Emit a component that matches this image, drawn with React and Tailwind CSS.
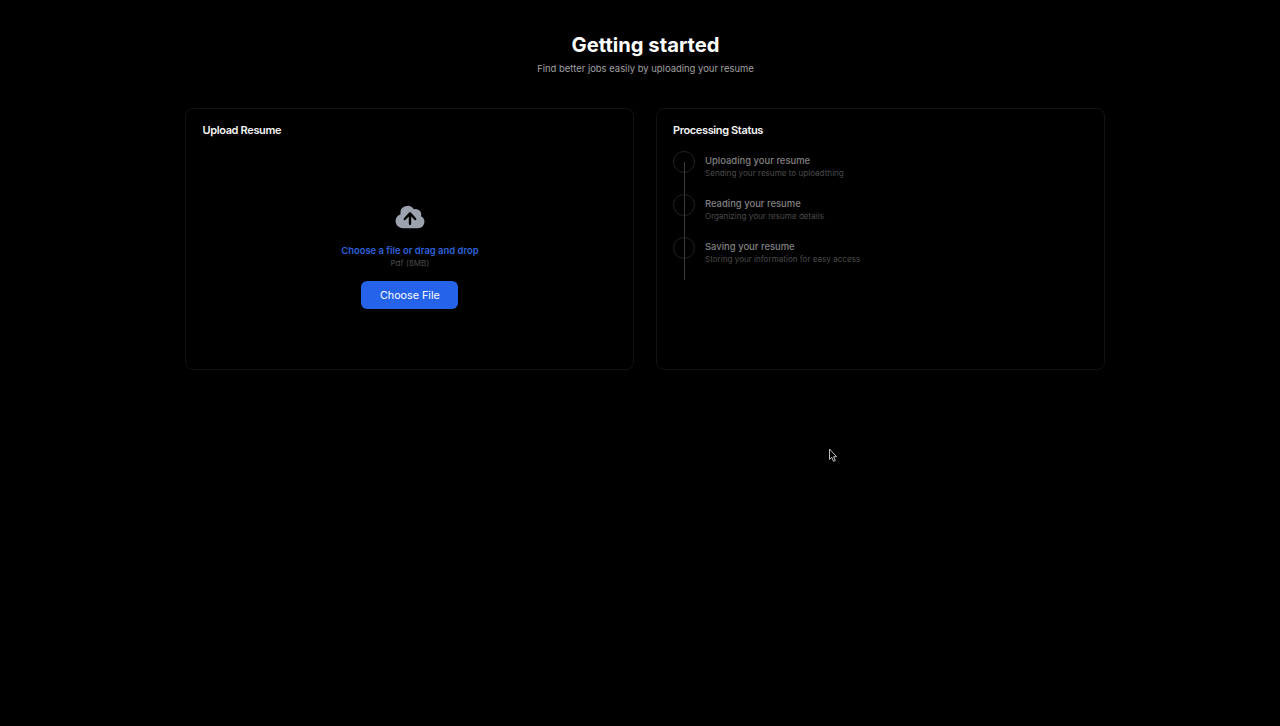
const steps = [
  { id: 'upload', title: 'Uploading your resume', description: 'Sending your resume to uploadthing' },
  { id: 'read', title: 'Reading your resume', description: 'Organizing your resume details' },
  { id: 'save', title: 'Saving your resume', description: 'Storing your information for easy access' },
]

function UploadCard() {
  return (
    <section className="flex-1 h-[262px] rounded-lg border border-[#121212] px-4 pt-[11px]">
      <h2 className="text-[11px] leading-5 font-semibold tracking-[-0.35px] text-[#f4f4f4]">Upload Resume</h2>
      <div className="flex flex-col items-center pt-[61px]">
        <svg className="w-8 h-8 text-[#9ca3af]" viewBox="0 0 20 20" fill="currentColor">
          <path
            fillRule="evenodd"
            clipRule="evenodd"
            d="M5.5 17a4.5 4.5 0 0 1-1.44-8.765 4.5 4.5 0 0 1 8.302-3.046 3.5 3.5 0 0 1 4.504 4.272A4 4 0 0 1 15 17H5.5Zm3.75-2.75a.75.75 0 0 0 1.5 0V9.66l1.95 2.1a.75.75 0 1 0 1.1-1.02l-3.25-3.5a.75.75 0 0 0-1.1 0l-3.25 3.5a.75.75 0 1 0 1.1 1.02l1.95-2.1v4.59Z"
          />
        </svg>
        <label className="mt-[10px] text-[9.45px] leading-4 font-semibold text-[#2f62dc]">
          Choose a file or drag and drop
        </label>
        <p className="text-[8.1px] leading-[9px] text-[#4b4b4b]">Pdf (8MB)</p>
        <button className="mt-[13px] w-[97px] h-[28px] rounded-md bg-[#2563eb] pt-[2px] text-[10.75px] text-white">
          Choose File
        </button>
      </div>
    </section>
  )
}

function StatusCard() {
  return (
    <section className="flex-1 h-[262px] rounded-lg border border-[#121212] px-4 pt-[11px]">
      <h2 className="text-[11px] leading-5 font-semibold tracking-[-0.37px] text-[#f4f4f4]">Processing Status</h2>
      <ol className="mt-[11px]">
        {steps.map((step) => (
          <li key={step.id} className="group relative flex h-[43px] gap-[10px]">
            {/* Connector down to the next step */}
            <span className="absolute left-[11px] top-[11px] h-full group-last:h-8 w-px bg-[#3a3a3a]"></span>
            <span className="w-[22px] h-[22px] shrink-0 rounded-full border border-[#222222]"></span>
            <div className="pt-[3px]">
              <h3 className="text-[9.45px] leading-[14px] font-medium text-[#808080]">{step.title}</h3>
              <p className="text-[8.1px] leading-[10px] text-[#4b4b4b]">{step.description}</p>
            </div>
          </li>
        ))}
      </ol>
    </section>
  )
}

export default function App() {
  return (
    <main className="relative min-h-screen bg-black font-['Inter',sans-serif]">
      <header className="ml-[11px] pt-[31px] text-center">
        <h1 className="text-[20.2px] leading-7 font-bold text-white">Getting started</h1>
        <p className="mt-[2px] text-[9.45px] leading-4 text-[#a1a1a1]">
          Find better jobs easily by uploading your resume
        </p>
      </header>

      <div className="ml-[185.4px] mt-[31px] flex w-[919.6px] gap-[21.6px]">
        <UploadCard />
        <StatusCard />
      </div>

      {/* Mouse pointer */}
      <svg className="absolute left-[828px] top-[448px] w-[10px] h-[15px]" viewBox="0 0 10 15" fill="none">
        <path
          d="M1.5 1v10.4l2.3-2.1 1.7 4 1.8-.8-1.7-3.8h3L1.5 1Z"
          fill="#000"
          stroke="#d4d4d4"
          strokeWidth="0.9"
          strokeLinejoin="round"
        />
      </svg>
    </main>
  )
}
